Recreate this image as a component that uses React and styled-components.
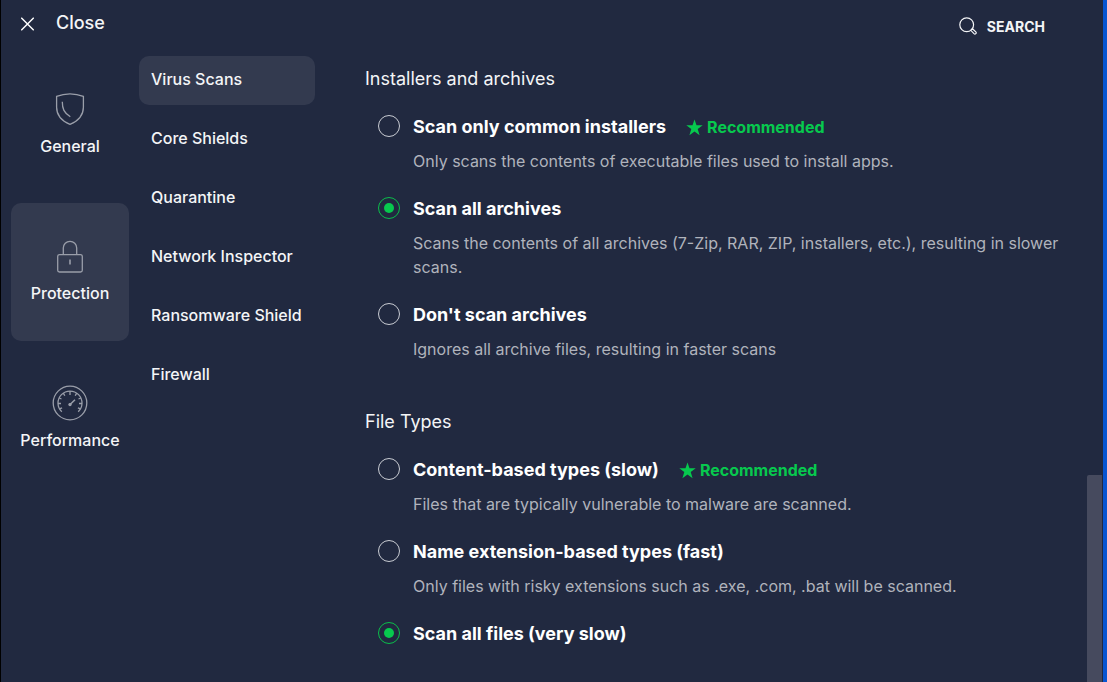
import React, { useState } from 'react';
import styled, { createGlobalStyle } from 'styled-components';

const GlobalStyle = createGlobalStyle`
   * {
      box-sizing: border-box;
   }

   body {
      margin: 0;
      background-color: #212940;
      color: #f4f5f7;
      font-family: "Inter", "Liberation Sans", sans-serif;
   }

   button {
      font-family: inherit;
      color: inherit;
      background: none;
      border: none;
      padding: 0;
      cursor: pointer;
   }
`

const Window = styled.div`
   display: flex;
   height: 100vh;
   overflow: hidden;
   background-color: #212940;
   border-left: 1px solid #000000;
   border-right: 4px solid #0755d1;
`

const Page = styled.div`
   flex: 1;
   min-width: 0;
`

const Header = styled.header`
   display: flex;
   justify-content: space-between;
   align-items: flex-start;
   height: 56px;
   padding: 10px 42px 0 20px;
`

const CloseButton = styled.button`
   display: flex;
   align-items: center;
   gap: 22px;
   height: 28px;
   font-size: 18px;
   font-weight: 500;
   line-height: 24px;

   span {
      padding-bottom: 2px;
   }
`

const SearchButton = styled.button`
   display: flex;
   align-items: center;
   gap: 10px;
   height: 32px;
   font-size: 14px;
   font-weight: bold;
`

const Columns = styled.div`
   display: flex;
   align-items: flex-start;
`

const Rail = styled.nav`
   display: flex;
   flex-direction: column;
   gap: 9px;
   flex: none;
   width: 118px;
   margin: 0 10px;
`

const RailItem = styled.button`
   display: flex;
   flex-direction: column;
   align-items: center;
   justify-content: center;
   gap: 7px;
   height: 138px;
   padding-bottom: 2px;
   border-radius: 10px;
   font-size: 16px;
   font-weight: 500;
   line-height: 24px;
   background-color: ${props => props.$active ? '#333a4f' : 'transparent'};
`

const SubNav = styled.nav`
   display: flex;
   flex-direction: column;
   gap: 10px;
   flex: none;
   width: 176px;
`

const SubNavItem = styled.button`
   height: 49px;
   padding: 0 12px 4px;
   border-radius: 10px;
   font-size: 16px;
   font-weight: 500;
   text-align: left;
   white-space: nowrap;
   background-color: ${props => props.$active ? '#333a4f' : 'transparent'};
`

const Content = styled.main`
   display: flex;
   flex-direction: column;
   gap: 47px;
   flex: 1;
   min-width: 0;
   padding: 9px 27px 24px 50px;
`

const Group = styled.fieldset`
   min-width: 0;
   margin: 0;
   padding: 0;
   border: none;
`

const GroupTitle = styled.legend`
   margin-bottom: 20px;
   padding: 0;
   font-size: 18px;
   line-height: 28px;
`

const Options = styled.div`
   display: flex;
   flex-direction: column;
   gap: 22px;
   padding-left: 13px;
`

const Option = styled.label`
   display: grid;
   grid-template-columns: 22px 1fr;
   column-gap: 13px;
   row-gap: 8px;
   cursor: pointer;
`

const Radio = styled.input`
   appearance: none;
   display: grid;
   place-items: center;
   width: 22px;
   height: 22px;
   margin: 2px 0 0;
   border: 1px solid #c9ccd3;
   border-radius: 50%;

   &:checked {
      border-color: #0bbd4b;
   }

   &:checked::before {
      content: '';
      width: 10px;
      height: 10px;
      border-radius: 50%;
      background-color: #07c94e;
   }
`

const OptionTitle = styled.span`
   display: flex;
   align-items: center;
   gap: 20px;
   font-size: 18px;
   font-weight: bold;
   line-height: 28px;
   color: #ffffff;
`

const Recommended = styled.span`
   display: flex;
   align-items: center;
   gap: 4px;
   font-size: 16px;
   font-weight: bold;
   color: #07c94e;
`

const Description = styled.span`
   grid-column: 2;
   font-size: 16px;
   line-height: 24px;
   color: #b0b3bc;
`

const ScrollTrack = styled.div`
   display: flex;
   flex-direction: column;
   justify-content: flex-end;
   flex: none;
   width: 16px;
   padding-right: 1px;
`

const ScrollThumb = styled.div`
   height: 207px;
   background-color: #464a5e;
   border-radius: 2px 0 0 0;
`

const CrossIcon = () => (
   <svg width="13" height="14" viewBox="0 0 13 14" fill="none" stroke="#ffffff" strokeWidth="1.3">
      <path d="M.3.800l12.400 12.400M12.700.8L.3 13.200" />
   </svg>
)

const SearchIcon = () => (
   <svg width="18" height="18" viewBox="0 0 18 18" fill="none" stroke="#f4f5f7" strokeWidth="1.2">
      <circle cx="7.7" cy="7.7" r="6.9" />
      <path d="M11.800 13.300l1.600-1.600 3.400 3.200a1.200 1.200 0 0 1-1.800 1.800z" />
   </svg>
)

const ShieldIcon = () => (
   <svg width="36" height="36" viewBox="0 0 36 36" fill="none" stroke="#9a9ea9" strokeWidth="1.3">
      <path d="M18 2.8c4.800 0 9 .8 13.400 2.600v10.800c0 8-5 13.600-13.400 17.200C9.600 29.800 4.600 24.200 4.600 16.200V5.400C9 3.600 13.200 2.800 18 2.800z" />
      <path d="M10.300 10.800c0 7 1.600 10.800 8 15" />
   </svg>
)

const LockIcon = () => (
   <svg width="36" height="36" viewBox="0 0 36 36" fill="none" stroke="#9a9ea9" strokeWidth="1.3">
      <rect x="5.700" y="16.600" width="24.600" height="17.400" rx="1.800" />
      <path d="M11.300 16.600V10a6.700 6.700 0 0 1 13.400 0v6.600" />
      <path d="M18 21.500v5" strokeWidth="1.600" />
   </svg>
)

const GaugeIcon = () => (
   <svg width="36" height="36" viewBox="0 0 36 36" fill="none" stroke="#9a9ea9" strokeWidth="1.3">
      <circle cx="18" cy="18" r="16.800" />
      <path d="M9.800 26.800A12 12 0 1 1 26.200 26.800" />
      <path d="M18 6v4M11.300 8.100l1.500 2.600M24.700 8.100l-1.500 2.600M7.200 13l2.300 1M28.800 13l-2.300 1M6 18.500h3M30 18.500h-3M7.500 23.800l2.600-1M28.500 23.800l-2.600-1" />
      <path d="M18.300 19.300l4.700-4.600" strokeWidth="1.500" />
      <circle cx="18" cy="19.600" r="1.300" fill="#9a9ea9" stroke="none" />
      <circle cx="18" cy="19.600" r="1" />
   </svg>
)

const StarIcon = () => (
   <svg width="17" height="17" viewBox="0 0 17 17" fill="#07c94e">
      <path d="M8.500.4l2 5.900h6.200l-5 3.700 1.900 6.200-5.100-3.700-5.100 3.700L5.300 10l-5-3.700h6.200z" />
   </svg>
)

const sections = [
   { name: 'General', Icon: ShieldIcon },
   { name: 'Protection', Icon: LockIcon },
   { name: 'Performance', Icon: GaugeIcon },
]

const pages = ['Virus Scans', 'Core Shields', 'Quarantine', 'Network Inspector', 'Ransomware Shield', 'Firewall']

const groups = [
   {
      id: 'archives',
      title: 'Installers and archives',
      options: [
         {
            title: 'Scan only common installers',
            text: 'Only scans the contents of executable files used to install apps.',
            recommended: true,
         },
         {
            title: 'Scan all archives',
            text: 'Scans the contents of all archives (7-Zip, RAR, ZIP, installers, etc.), resulting in slower scans.',
         },
         {
            title: "Don't scan archives",
            text: 'Ignores all archive files, resulting in faster scans',
         },
      ],
   },
   {
      id: 'types',
      title: 'File Types',
      options: [
         {
            title: 'Content-based types (slow)',
            text: 'Files that are typically vulnerable to malware are scanned.',
            recommended: true,
         },
         {
            title: 'Name extension-based types (fast)',
            text: 'Only files with risky extensions such as .exe, .com, .bat will be scanned.',
         },
         { title: 'Scan all files (very slow)' },
      ],
   },
]

export default function App() {
   const [section, setSection] = useState('Protection')
   const [page, setPage] = useState('Virus Scans')
   const [chosen, setChosen] = useState({ archives: 1, types: 2 })

   return (
      <Window>
         <GlobalStyle />
         <Page>
            <Header>
               <CloseButton type="button">
                  <CrossIcon />
                  <span>Close</span>
               </CloseButton>
               <SearchButton type="button">
                  <SearchIcon />
                  SEARCH
               </SearchButton>
            </Header>
            <Columns>
               <Rail>
                  {sections.map(({ name, Icon }) => (
                     <RailItem key={name} type="button" $active={name === section} onClick={() => setSection(name)}>
                        <Icon />
                        {name}
                     </RailItem>
                  ))}
               </Rail>
               <SubNav>
                  {pages.map(name => (
                     <SubNavItem key={name} type="button" $active={name === page} onClick={() => setPage(name)}>
                        {name}
                     </SubNavItem>
                  ))}
               </SubNav>
               <Content>
                  {groups.map(group => (
                     <Group key={group.id}>
                        <GroupTitle>{group.title}</GroupTitle>
                        <Options>
                           {group.options.map((option, i) => (
                              <Option key={option.title}>
                                 <Radio
                                    type="radio"
                                    name={group.id}
                                    checked={chosen[group.id] === i}
                                    onChange={() => setChosen({ ...chosen, [group.id]: i })}
                                 />
                                 <OptionTitle>
                                    {option.title}
                                    {option.recommended && <Recommended><StarIcon />Recommended</Recommended>}
                                 </OptionTitle>
                                 {option.text && <Description>{option.text}</Description>}
                              </Option>
                           ))}
                        </Options>
                     </Group>
                  ))}
               </Content>
            </Columns>
         </Page>
         <ScrollTrack>
            <ScrollThumb />
         </ScrollTrack>
      </Window>
   );
}
